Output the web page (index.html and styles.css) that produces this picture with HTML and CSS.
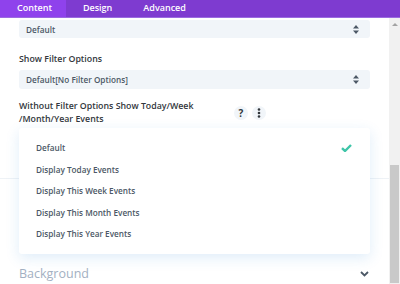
FILE: index.html
```html
<!DOCTYPE html>
<html lang="en">
<head>
    <meta charset="UTF-8">
    <meta name="viewport" content="width=device-width, initial-scale=1.0">
    <title>Module Settings</title>
    <link rel="stylesheet" href="styles.css">
</head>
<body>
    <div class="tabs">
        <div class="tab active">Content</div>
        <div class="tab">Design</div>
        <div class="tab">Advanced</div>
    </div>

    <div class="body">
        <div class="panel">
            <div class="select first">
                <span>Default</span>
                <svg class="arrows" width="6" height="9" viewBox="0 0 6 9"><path d="M3 0L6 3.5H0Z M3 9L0 5.5H6Z" fill="#4c5866"/></svg>
            </div>

            <div class="label">Show Filter Options</div>
            <div class="select">
                <span>Default[No Filter Options]</span>
                <svg class="arrows" width="6" height="9" viewBox="0 0 6 9"><path d="M3 0L6 3.5H0Z M3 9L0 5.5H6Z" fill="#4c5866"/></svg>
            </div>

            <div class="label-row">
                <div class="label-text">Without Filter Options Show Today/Week<br>/Month/Year Events</div>
                <div class="icon-btn">?</div>
                <div class="icon-btn">
                    <svg width="4" height="10" viewBox="0 0 4 10"><circle cx="2" cy="1.5" r="1.3" fill="#32373c"/><circle cx="2" cy="5" r="1.3" fill="#32373c"/><circle cx="2" cy="8.5" r="1.3" fill="#32373c"/></svg>
                </div>
            </div>

            <div class="field">
                <div class="select hidden-select"><span>Default</span></div>
                <div class="dropdown">
                    <div class="option selected">
                        <span>Default</span>
                        <svg width="11" height="8" viewBox="0 0 11 8"><path d="M1 4.2L4 7L10 1" stroke="#3ec5a8" stroke-width="2.4" fill="none"/></svg>
                    </div>
                    <div class="option">Display Today Events</div>
                    <div class="option">Display This Week Events</div>
                    <div class="option">Display This Month Events</div>
                    <div class="option">Display This Year Events</div>
                </div>
            </div>

            <div class="separator"></div>

            <div class="toggle">
                <span>Background</span>
                <svg width="9" height="6" viewBox="0 0 9 6"><path d="M1 1L4.5 4.5L8 1" stroke="#4c5866" stroke-width="1.8" fill="none"/></svg>
            </div>
        </div>

        <div class="scrollbar">
            <div class="scroll-up"></div>
            <div class="thumb"></div>
        </div>
    </div>
</body>
</html>
```

FILE: styles.css
```css
body {
    margin: 0;
    width: 400px;
    height: 284px;
    overflow: hidden;
    background: #fff;
    font-family: "Open Sans", Arial, sans-serif;
    color: #32373c;
}

/* Tab-Leiste */
.tabs {
    display: flex;
    height: 17px;
    background: #7e3bd0;
    border-bottom: 1px solid #9b6be0;
}

.tab {
    padding: 0 14px 0 17px;
    line-height: 15px;
    font-size: 9px;
    font-weight: 600;
    color: #fff;
}

.tab.active {
    background: #8f42ec;
}

.body {
    display: flex;
    height: 266px;
}

.panel {
    flex: 1;
    padding: 0 19px;
    overflow: hidden;
}

.select {
    display: flex;
    align-items: center;
    justify-content: space-between;
    height: 19px;
    padding: 0 11px 0 7px;
    background: #f1f5f9;
    border-radius: 3px;
    font-size: 8.2px;
    font-weight: 600;
    color: #4c5866;
}

.select.first {
    margin-top: 2px;
    height: 18px;
}

.label {
    margin: 14px 0 3px;
    font-size: 8.8px;
    line-height: 15px;
    font-weight: 600;
}

.label-row {
    display: flex;
    align-items: center;
    margin-top: 11px;
}

.label-text {
    width: 211px;
    font-size: 8.8px;
    line-height: 13px;
    font-weight: 600;
}

.icon-btn {
    display: flex;
    align-items: center;
    justify-content: center;
    width: 14px;
    height: 14px;
    margin-left: 4px;
    border-radius: 50%;
    background: #f1f5f9;
    font-size: 10px;
    font-weight: 700;
    color: #32373c;
}

.field {
    position: relative;
    margin-top: 2px;
}

.hidden-select {
    visibility: hidden;
}

/* Aufgeklappte Auswahl */
.dropdown {
    position: absolute;
    top: 0;
    left: 0;
    right: 0;
    z-index: 2;
    padding: 9px 0;
    background: #fff;
    border-radius: 3px;
    box-shadow: 0 4px 14px rgba(43, 135, 218, 0.15);
}

.option {
    display: flex;
    align-items: center;
    justify-content: space-between;
    padding: 0 18px 0 17px;
    line-height: 21.5px;
    font-size: 8.2px;
    font-weight: 600;
    color: #4c5866;
}

.separator {
    margin: 31px -19px 0;
    border-top: 1px solid #eef2f6;
}

.toggle {
    display: flex;
    align-items: center;
    justify-content: space-between;
    margin-top: 86px;
    padding-right: 1px;
    font-size: 12.5px;
    line-height: 18px;
    color: #a3b0c2;
}

/* Scrollleiste */
.scrollbar {
    position: relative;
    width: 11px;
    background: #f1f1f1;
}

.scroll-up {
    margin: 5px auto 0;
    width: 0;
    height: 0;
    border-left: 3px solid transparent;
    border-right: 3px solid transparent;
    border-bottom: 3px solid #a3a3a3;
}

.thumb {
    position: absolute;
    top: 147px;
    left: 1px;
    width: 9px;
    height: 118px;
    background: #c9c9c9;
}
```
